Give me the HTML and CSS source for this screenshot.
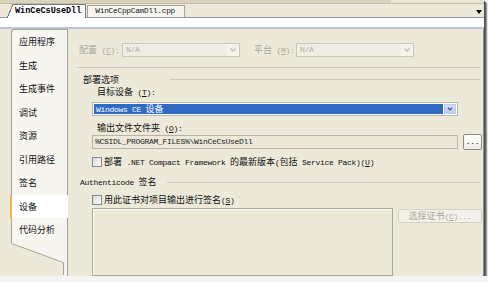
FILE: index.html
```html
<!DOCTYPE html>
<html>
<head>
<meta charset="utf-8">
<link rel="stylesheet" href="styles.css">
</head>
<body>
<div class="window">
  <div class="topstrip"></div>
  <div class="tabbar">
    <div class="tab active"><span class="tab-slant"></span><span class="tab-body">WinCeCsUseDll</span></div>
    <div class="tab inactive">WinCeCppCamDll.cpp</div>
    <div class="tabbar-fill"></div>
    <span class="tab-arrow"></span>
  </div>
  <div class="band"></div>
  <div class="main">
    <div class="nav">
      <ul class="nav-list">
        <li>应用程序</li>
        <li>生成</li>
        <li>生成事件</li>
        <li>调试</li>
        <li>资源</li>
        <li>引用路径</li>
        <li>签名</li>
        <li class="sel">设备</li>
        <li>代码分析</li>
      </ul>
      <svg class="nav-tail" width="56" height="34" viewBox="0 0 56 34">
        <polygon points="0,0 56,0 56,34 52.5,34 52.5,20.5 0.5,1.5" fill="#f6f5f0"/>
        <polyline points="0.5,0 0.5,1.5 52.5,20.5 52.5,33" fill="none" stroke="#a8a698" stroke-width="1"/>
      </svg>
    </div>
    <div class="content">
      <div class="row1">
        <span class="lbl lbl1 dis">配置<span class="m"> (<u>C</u>):</span></span>
        <div class="sel-dis"><span class="m">N/A</span><span class="dd"><svg width="12" height="12" viewBox="0 0 12 12"><polyline points="3.5,4.5 6,7 8.5,4.5" fill="none" stroke="#c4c1b3" stroke-width="1.4"/></svg></span></div>
        <span class="lbl lbl2 dis">平台<span class="m"> (<u>M</u>):</span></span>
        <div class="sel-dis"><span class="m">N/A</span><span class="dd"><svg width="12" height="12" viewBox="0 0 12 12"><polyline points="3.5,4.5 6,7 8.5,4.5" fill="none" stroke="#c4c1b3" stroke-width="1.4"/></svg></span></div>
      </div>
      <div class="sep"></div>
      <div class="ghead"><span class="ghead-label">部署选项</span><span class="gline"></span></div>
      <div class="lab"><span>目标设备<span class="m"> (<u>T</u>):</span></span></div>
      <div class="combo">
        <div class="combo-val"><span><span class="m">Windows CE </span>设备</span></div>
        <div class="combo-btn"><svg width="12" height="12" viewBox="0 0 12 12"><polyline points="3.5,4.5 6,7 8.5,4.5" fill="none" stroke="#3d5279" stroke-width="1.5"/></svg></div>
      </div>
      <div class="lab lab-gap"><span>输出文件文件夹<span class="m"> (<u>O</u>):</span></span></div>
      <div class="pathrow">
        <div class="textbox"><span class="m">%CSIDL_PROGRAM_FILES%\WinCeCsUseDll</span></div>
        <div class="browse"><span class="m">...</span></div>
      </div>
      <div class="check check1"><span class="cb"></span><span>部署<span class="m"> .NET Compact Framework </span>的最新版本<span class="m">(</span>包括<span class="m"> Service Pack)(<u>U</u>)</span></span></div>
      <div class="ghead auth"><span class="auth-label"><span class="m">Authenticode </span>签名</span><span class="gline"></span></div>
      <div class="check check2"><span class="cb"></span><span>用此证书对项目输出进行签名<span class="m">(<u>S</u>)</span></span></div>
      <div class="bottom">
        <div class="bigbox"></div>
        <div class="certbtn dis"><span>选择证书<span class="m">(<u>C</u>)...</span></span></div>
      </div>
    </div>
  </div>
</div>
</body>
</html>
```
FILE: styles.css
```css
* { box-sizing: border-box; margin: 0; padding: 0; }
body {
  background: #f4f4f4;
  font-family: "Noto Sans CJK SC", "Noto Sans", sans-serif;
  font-size: 9px;
  line-height: 1;
  color: #111;
}
.m { font-family: "Liberation Mono", monospace; font-size: 8px; letter-spacing: -0.3px; }
u { text-decoration: underline; }
.dis { color: #aca899; }

.window {
  width: 484px;
  height: 276px;
  background: #ece9d8;
  display: flex;
  flex-direction: column;
  box-shadow: 1px 1px 0 #4e4e4e, 2px 2px 0 #666, 3px 3px 1px #9a9a9a;
}
.topstrip {
  height: 4px;
  background: linear-gradient(to right, #d9d2bc 0, #d9d2bc 391px, #e8e5d5 391px);
  border-bottom: 1px solid #c3bda8;
}
.tabbar {
  height: 14px;
  display: flex;
  align-items: flex-end;
  padding-left: 7px;
  border-bottom: 1px solid #8e98a6;
}
.tab.active {
  display: flex;
  height: 14px;
  margin-bottom: -1px;
  position: relative;
  z-index: 1;
}
.tab-slant {
  width: 6px;
  background: linear-gradient(to bottom right, transparent 46%, #7a7a7a 47%, #7a7a7a 56%, #fcfcfe 57%);
}
.tab-body {
  background: #fcfcfe;
  border-top: 1px solid #7a7a7a;
  border-right: 1px solid #7a7a7a;
  padding: 0 4px 0 2px;
  font-family: "Liberation Mono", monospace;
  font-weight: bold;
  font-size: 8.5px;
  line-height: 13px;
  color: #000;
}
.tab.inactive {
  height: 12px;
  width: 98px;
  margin-left: 1px;
  border: 1px solid #a3a3a0;
  border-bottom: none;
  background: #f5f4ef;
  padding-left: 7px;
  font-family: "Liberation Mono", monospace;
  font-size: 7.8px;
  letter-spacing: -0.25px;
  line-height: 11px;
  color: #222;
}
.tabbar-fill { flex: 1; }
.tab-arrow {
  align-self: flex-start;
  margin-top: 6px;
  margin-right: 2px;
  width: 0;
  height: 0;
  border-left: 3.5px solid transparent;
  border-right: 3.5px solid transparent;
  border-top: 4px solid #000;
}
.band {
  height: 11px;
  background: #fff;
  border-bottom: 2px solid #bac4d4;
}

.main { flex: 1; display: flex; min-height: 0; }

.nav { width: 67px; display: flex; flex-direction: column; }
.nav-list {
  list-style: none;
  margin-left: 11px;
  width: 56px;
  background: #f6f5f0;
  border-left: 1px solid #a8a698;
  border-top: 1px solid #a8a698;
  border-top-left-radius: 3px;
}
.nav-list li {
  height: 23.5px;
  display: flex;
  align-items: center;
  padding-left: 7px;
  color: #111;
}
.nav-list li.sel {
  background: #fff;
  margin-left: -2px;
  margin-right: -1px;
  border-left: 2px solid #efb545;
  position: relative;
  z-index: 1;
}
.nav-tail { margin-left: 11px; display: block; }

.content {
  flex: 1;
  border-left: 1px solid #9aa0a8;
  border-right: 1px solid #8e929a;
  padding-top: 14px;
  display: flex;
  flex-direction: column;
}
.row1 {
  height: 14px;
  display: flex;
  align-items: center;
  padding-left: 11px;
}
.lbl1 { width: 43px; }
.lbl2 { width: 42px; margin-left: 14px; }
.sel-dis {
  width: 118px;
  height: 14px;
  border: 1px solid #cac8bb;
  background: #efede5;
  display: flex;
  align-items: center;
  justify-content: space-between;
  padding-left: 3px;
  color: #b2afa0;
}
.dd {
  width: 12px;
  height: 12px;
  background: #f3f2ec;
  display: flex;
}
.sep {
  margin: 10px 3px 0 9px;
  border-top: 1px solid #cfcbbc;
}
.ghead {
  height: 14px;
  margin-top: 4px;
  display: flex;
  align-items: center;
  padding-left: 15px;
  margin-right: 3px;
}
.ghead-label { width: 87px; }
.gline { flex: 1; border-top: 1px solid #cfcbbc; }
.lab {
  height: 12px;
  margin-left: 29px;
  display: flex;
  align-items: center;
}
.lab-gap { margin-top: 6px; }
.combo {
  margin: 4px 0 0 24px;
  width: 366px;
  height: 14px;
  border: 1px solid #bcb9ab;
  padding: 1px;
  background: #fff;
  display: flex;
}
.combo-val {
  flex: 1;
  background: #316ac5;
  color: #fff;
  padding-left: 2px;
  display: flex;
  align-items: center;
}
.combo-btn {
  width: 12px;
  margin-left: 1px;
  background: linear-gradient(#d7e2fb, #b9cbf3);
  border: 1px solid #bccbed;
  display: flex;
  align-items: center;
  justify-content: center;
}
.pathrow {
  height: 16px;
  margin-left: 24px;
  display: flex;
  align-items: center;
}
.textbox {
  width: 366px;
  height: 14px;
  border: 1px solid #b6b3a5;
  background: #ece9d8;
  padding-left: 2px;
  display: flex;
  align-items: center;
  color: #222;
}
.browse {
  width: 19px;
  height: 16px;
  margin-left: 5px;
  border: 1px solid #8e8b7d;
  border-radius: 2px;
  background: linear-gradient(#fff, #ebeae4);
  display: flex;
  align-items: center;
  justify-content: center;
}
.check {
  height: 14px;
  margin-left: 24px;
  display: flex;
  align-items: center;
}
.check1 { margin-top: 5px; }
.check2 { margin-top: 4px; }
.cb {
  width: 10px;
  height: 10px;
  border: 1px solid #7f8a96;
  background: linear-gradient(135deg, #dcdcd5, #fbfbf9);
  margin-right: 2px;
}
.auth { margin-top: 6px; padding-left: 12px; }
.auth-label { width: 87px; }
.bottom {
  flex: 1;
  margin: 1px 0 0 24px;
  display: flex;
  align-items: flex-start;
}
.bigbox {
  width: 301px;
  height: 100%;
  border: 1px solid #aaa89a;
  box-shadow: inset 1px 1px 0 #fbfaf6;
  background: #ece9d8;
}
.certbtn {
  width: 84px;
  height: 14px;
  margin: 1px 0 0 5px;
  border: 1px solid #d2d0c4;
  border-radius: 2px;
  background: #f1f0e9;
  display: flex;
  align-items: center;
  justify-content: center;
}
```
